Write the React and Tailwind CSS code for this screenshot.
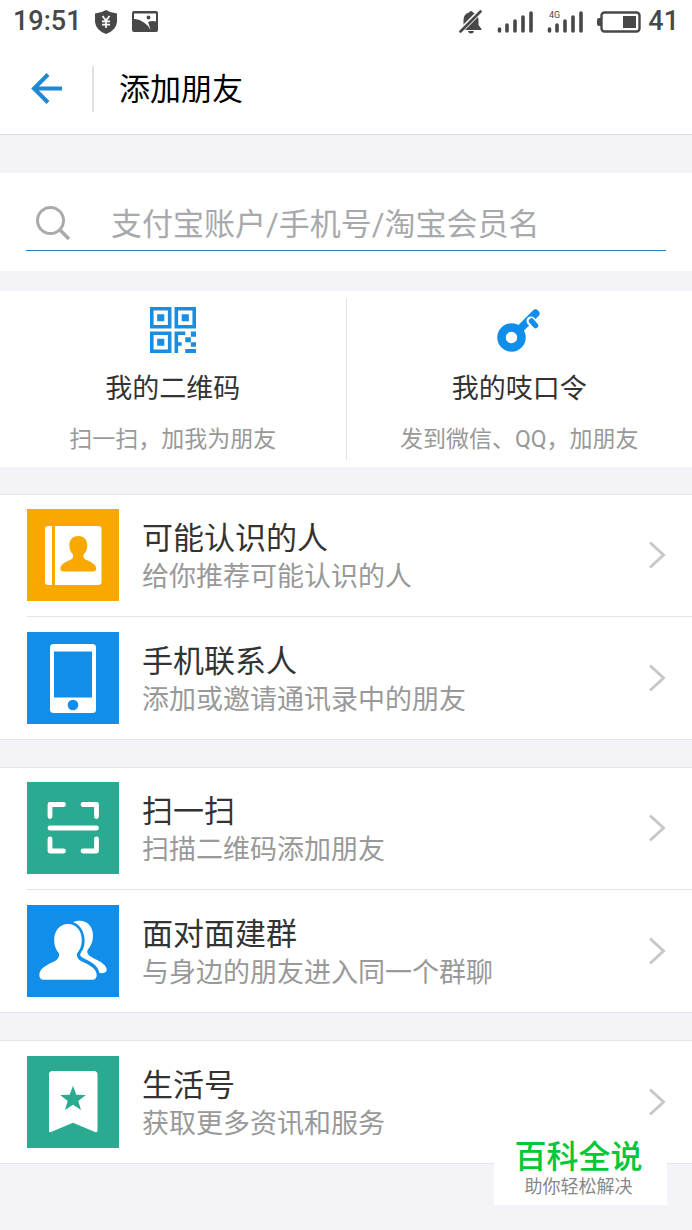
const contactRows = [
    { title: "可能认识的人", desc: "给你推荐可能认识的人", icon: ContactBookIcon, bg: "bg-[#f9a800]" },
    { title: "手机联系人", desc: "添加或邀请通讯录中的朋友", icon: PhoneIcon, bg: "bg-[#108ee9]" },
]

const groupRows = [
    { title: "扫一扫", desc: "扫描二维码添加朋友", icon: ScanIcon, bg: "bg-[#2aab91]" },
    { title: "面对面建群", desc: "与身边的朋友进入同一个群聊", icon: PeopleIcon, bg: "bg-[#108ee9]" },
]

const lifeRows = [
    { title: "生活号", desc: "获取更多资讯和服务", icon: BookmarkIcon, bg: "bg-[#2aab91]" },
]

function ContactBookIcon() {
    return (
        <svg viewBox="0 0 92 92" className="size-full" aria-hidden="true">
            <path d="M21 17H25V76H21Q18 76 18 73V20Q18 17 21 17Z" fill="#fff" />
            <path d="M28 17H71.500Q74.500 17 74.500 20V73Q74.500 76 71.500 76H28Z" fill="#fff" />
            <path
                d="M51.300 27C57 27 60.500 31 60.300 36.500C60.200 41 58.500 43.500 56.500 45.500C56 48.500 57 50 60 51.200C65.500 53.300 69 56 69.200 59.500C69.300 61.500 68 62.500 66 62.500H36.600C34.600 62.500 33.300 61.500 33.400 59.500C33.600 56 37 53.300 42.600 51.200C45.600 50 46.600 48.500 46.100 45.500C44.100 43.500 42.400 41 42.300 36.500C42.100 31 45.600 27 51.300 27Z"
                fill="#f9a800"
            />
        </svg>
    )
}

function PhoneIcon() {
    return (
        <svg viewBox="0 0 92 92" className="size-full" aria-hidden="true">
            <rect x="23" y="12" width="46" height="69" rx="3.500" fill="#fff" />
            <rect x="27" y="19.500" width="38" height="46" fill="#108ee9" />
            <circle cx="46" cy="73" r="5.300" fill="#108ee9" />
        </svg>
    )
}

function ScanIcon() {
    return (
        <svg viewBox="0 0 92 92" className="size-full" aria-hidden="true" fill="none" stroke="#fff" strokeWidth="4.800" strokeLinecap="round" strokeLinejoin="round">
            <path d="M36.500 22.500H23V34.500" />
            <path d="M56 22.500H69.500V34.500" />
            <path d="M23 57V69H36.500" />
            <path d="M69.500 57V69H56" />
            <path d="M23 46H69.500" />
        </svg>
    )
}

function PeopleIcon() {
    return (
        <svg viewBox="0 0 92 92" className="size-full" aria-hidden="true" fill="#fff">
            <path d="M41 19C49.500 19 54.800 26 54.800 35C54.800 41.500 52.500 45.500 50 48.500C49.500 52 51 54.500 55 56.500C62 60 69.500 63 69.700 70C69.800 73 68 74.700 65.500 74.700H16.500C14 74.700 12.200 73 12.300 70C12.500 63 20 60 27 56.500C31 54.500 32.500 52 32 48.500C29.500 45.500 27.200 41.500 27.200 35C27.200 26 32.500 19 41 19Z" />
            <path d="M46 17C58 12.500 66 20 66 30.500C66 37 63.500 41.500 60.500 45C59.500 48.500 62 51 67 53.500C74 57 79.500 60 79.700 65C79.800 67.500 77 68.500 72.500 68C71 60.500 65 57.500 58 54C54 52 52 50.500 54 47.500C57 43.500 58 39 57.500 33.500C56.500 24.500 52 19 46 17Z" />
        </svg>
    )
}

function BookmarkIcon() {
    return (
        <svg viewBox="0 0 92 92" className="size-full" aria-hidden="true">
            <path d="M25.500 15H67Q70.500 15 70.500 18.500V74.500Q70.500 77 68 76L46 66.700L24 76Q22 77 22 74.500V18.500Q22 15 25.500 15Z" fill="#fff" />
            <path d="M46 29.700L49.300 38.700L58.800 39L51.300 44.900L54 54L46 48.700L38 54L40.700 44.900L33.200 39L42.700 38.700Z" fill="#2aab91" />
        </svg>
    )
}

function QrIcon() {
    return (
        <svg viewBox="0 0 45 45" className="h-[46px] w-[46px]" aria-hidden="true" fill="#1a8de0">
            <path fillRule="evenodd" d="M0 0H21V21H0ZM3.500 3.500V17.500H17.500V3.500Z" />
            <path fillRule="evenodd" d="M24 0H45V21H24ZM27.500 3.500V17.500H41.500V3.500Z" />
            <path fillRule="evenodd" d="M0 24H21V45H0ZM3.500 27.500V41.500H17.500V27.500Z" />
            <path d="M7 7H14V14H7ZM31 7H38V14H31ZM7 31H14V38H7Z" />
            <path d="M24 24H34.500V27.500H27.500V34.500H31V38H27.500V45H24Z" />
            <path d="M40 24H45V29H40ZM34.500 29.500H40V34.500H45V39H40V34.500H34.500ZM34.500 41H45V45H34.500Z" />
        </svg>
    )
}

function KeyIcon() {
    return (
        <svg viewBox="0 0 46 46" className="h-[46px] w-[46px]" aria-hidden="true" fill="none">
            <path d="M24 22L39.500 6.500" stroke="#108ee9" strokeWidth="8" strokeLinecap="round" />
            <path d="M35 14L39 18" stroke="#fff" strokeWidth="9" strokeLinecap="round" />
            <path d="M35.500 14L39.500 18.500" stroke="#108ee9" strokeWidth="5.500" strokeLinecap="round" />
            <circle cx="15.500" cy="30.500" r="10" stroke="#108ee9" strokeWidth="8.500" />
        </svg>
    )
}

function StatusBar() {
    return (
        <div className="flex h-[43px] items-center justify-between px-[13px] text-[27px] font-medium text-[#484848]">
            <div className="flex items-center">
                <span>19:51</span>
                <svg viewBox="0 0 22 24" className="ml-[13px] h-6 w-[22px]" aria-hidden="true">
                    <path d="M11 0Q15.500 3 22 3.500V12Q21 20.500 11 24Q1 20.500 0 12V3.500Q6.500 3 11 0Z" fill="#484848" />
                    <path d="M7.500 6L11 10.500L14.500 6M11 10.500V18M7 11.300H15M7 14.700H15" stroke="#fff" strokeWidth="1.700" fill="none" />
                </svg>
                <svg viewBox="0 0 26 21" className="ml-[15px] h-[21px] w-[26px]" aria-hidden="true">
                    <rect width="26" height="21" rx="2" fill="#484848" />
                    <path d="M2 2.500H24V10.500Q20 9.500 16 11Q17.500 15 18.500 19Q16 14 12 11.500Q7 7.500 2 8Z" fill="#fff" />
                    <circle cx="16.500" cy="6.500" r="1.900" fill="#484848" />
                </svg>
            </div>
            <div className="flex items-center">
                <svg viewBox="0 0 24 24" className="h-6 w-6" aria-hidden="true">
                    <path d="M12 1Q13.500 1 14 2.500Q19.500 4 19.500 10V15L22.500 19V20H2V19L4.500 15V10Q4.500 4 10 2.500Q10.500 1 12 1ZM9 21H15Q14.500 23.500 12 23.500Q9.500 23.500 9 21Z" fill="#484848" />
                    <path d="M2 20.500L21 1.500" stroke="#fff" strokeWidth="5" />
                    <path d="M1.500 21.500L21.500 1.500" stroke="#484848" strokeWidth="2.600" strokeLinecap="round" />
                </svg>
                <SignalIcon />
                <SignalIcon label="4G" />
                <svg viewBox="0 0 44 22" className="ml-[14px] h-[22px] w-[44px]" aria-hidden="true">
                    <path d="M4 7H2Q0 7 0 9V13Q0 15 2 15H4Z" fill="#484848" />
                    <rect x="4.500" y="1.500" width="38" height="19" rx="3" fill="none" stroke="#484848" strokeWidth="2.400" />
                    <rect x="26" y="5" width="13" height="12" fill="#484848" />
                </svg>
                <span className="ml-[7px]">41</span>
            </div>
        </div>
    )
}

function SignalIcon({ label }) {
    return (
        <svg viewBox="0 0 36 24" className="ml-[14px] h-6 w-[36px]" aria-hidden="true" fill="#484848">
            {label && <text x="2" y="8" fontSize="9" fontWeight="400">{label}</text>}
            <path d="M2.500 19V21M10 15V21M18 11V21M26 7V21M34 3V21" stroke="#484848" strokeWidth="3.600" strokeLinecap="round" />
        </svg>
    )
}

function Tile({ icon: Icon, title, desc }) {
    return (
        <a href="#" className="flex flex-1 flex-col items-center pt-4 pb-[11px]">
            <Icon />
            <span className="mt-[18px] text-[27px] leading-9 text-[#333]">{title}</span>
            <span className="mt-[17px] text-[23px] leading-8 text-[#999]">{desc}</span>
        </a>
    )
}

function RowGroup({ rows }) {
    return (
        <ul className="mb-[27px] border-y border-[#e4e4e8] bg-white pl-[27px]">
            {rows.map(({ title, desc, icon: Icon, bg }) => (
                <li key={title} className="h-[122px] border-b border-[#e4e4e8] last:border-b-0">
                    <a href="#" className="flex h-full items-center pr-[26px] pb-px">
                        <span className={`size-[92px] shrink-0 ${bg}`}>
                            <Icon />
                        </span>
                        <span className="ml-[23px] flex flex-1 flex-col pt-[6px]">
                            <span className="text-[31px] leading-[39px] text-[#333]">{title}</span>
                            <span className="text-[27px] leading-[39px] text-[#999]">{desc}</span>
                        </span>
                        <svg viewBox="0 0 18 28" className="h-7 w-[18px]" aria-hidden="true">
                            <path d="M2 1.500L15.500 14L2 26.500" fill="none" stroke="#c8c8cb" strokeWidth="3" />
                        </svg>
                    </a>
                </li>
            ))}
        </ul>
    )
}

export default function App() {
    return (
        <div className="relative min-h-screen bg-[#f3f3f8] font-[Roboto,'Noto_Sans_CJK_SC',sans-serif]">
            <div className="border-b border-[#dcdcdf] bg-white">
                <StatusBar />
                <header className="flex h-[91px] items-center">
                    <button type="button" aria-label="返回" className="ml-[31px] h-8 w-8">
                        <svg viewBox="0 0 32 32" aria-hidden="true" fill="none" stroke="#1e88d2" strokeWidth="4">
                            <path d="M17 1.500L3 15.500L17 29.500M3 15.500H31" />
                        </svg>
                    </button>
                    <div className="ml-[29px] h-[46px] w-[2px] bg-[#e2e2e2]" />
                    <h1 className="ml-[25px] pt-0.5 text-[31px] leading-10 text-black">添加朋友</h1>
                </header>
            </div>

            <form className="mt-[38px] bg-white px-[26px] pt-6 pb-5">
                <label className="flex h-[54px] items-center border-b border-[#2583c2]">
                    <svg viewBox="0 0 36 36" className="ml-[9px] h-9 w-9 shrink-0" aria-hidden="true" fill="none" stroke="#aaa" strokeWidth="3">
                        <circle cx="15.500" cy="14.500" r="13" />
                        <path d="M25 24L34 33" strokeWidth="3.500" />
                    </svg>
                    <input
                        type="text"
                        aria-label="搜索朋友"
                        placeholder="支付宝账户/手机号/淘宝会员名"
                        className="ml-10 min-w-0 flex-1 pt-0.5 text-[31px] leading-10 text-[#333] outline-none placeholder:text-[#a8a9ac]"
                    />
                </label>
            </form>

            <div className="mt-5 mb-[27px] flex bg-white">
                <Tile icon={QrIcon} title="我的二维码" desc="扫一扫，加我为朋友" />
                <div className="my-[7px] w-px bg-[#e2e2e2]" />
                <Tile icon={KeyIcon} title="我的吱口令" desc="发到微信、QQ，加朋友" />
            </div>

            <RowGroup rows={contactRows} />
            <RowGroup rows={groupRows} />
            <RowGroup rows={lifeRows} />

            {/* floating brand badge */}
            <div className="absolute right-[25px] bottom-[25px] w-[173px] bg-white pr-1 pb-2 text-center">
                <p className="text-[32px] leading-10 font-medium text-[#00c837]">百科全说</p>
                <p className="text-[18px] leading-5 text-[#888]">助你轻松解决</p>
            </div>
        </div>
    )
}
